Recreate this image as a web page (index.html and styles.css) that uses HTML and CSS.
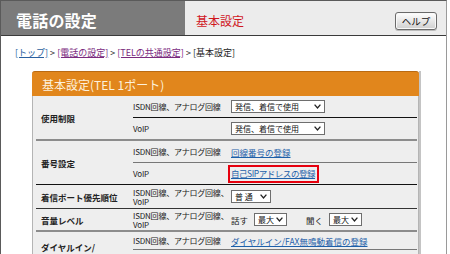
FILE: index.html
```html
<!DOCTYPE html>
<html lang="ja">
<head>
<meta charset="utf-8">
<title>電話の設定</title>
<link rel="stylesheet" href="styles.css">
</head>
<body>
<div class="frame">
  <header class="top">
    <div class="title">電話の設定</div>
    <div class="subtitle">基本設定</div>
    <button class="help">ヘルプ</button>
  </header>
  <nav class="crumbs">
    <a class="c-top" href="#">[トップ]</a> &gt; <a class="c-vis" href="#">[電話の設定]</a> &gt; <a class="c-vis" href="#">[TELの共通設定]</a> &gt; [基本設定]
  </nav>
  <section class="panel">
    <h2 class="panel-head">基本設定(TEL 1ポート)</h2>
    <div class="rows">
      <div class="row row-gray">
        <div class="label">使用制限</div>
        <div class="subs">
          <div class="sub"><div class="kind">ISDN回線、アナログ回線</div><div class="ctl"><div class="sel w93"><span>発信、着信で使用</span><svg class="chev" viewBox="0 0 7 5"><polyline points="0.6,0.6 3.5,4 6.4,0.6"/></svg></div></div></div>
          <div class="sub"><div class="kind">VoIP</div><div class="ctl"><div class="sel w93"><span>発信、着信で使用</span><svg class="chev" viewBox="0 0 7 5"><polyline points="0.6,0.6 3.5,4 6.4,0.6"/></svg></div></div></div>
        </div>
      </div>
      <div class="row row-dark">
        <div class="label">番号設定</div>
        <div class="subs">
          <div class="sub sub-light"><div class="kind">ISDN回線、アナログ回線</div><div class="ctl"><a class="link" href="#">回線番号の登録</a></div></div>
          <div class="sub"><div class="kind">VoIP</div><div class="ctl"><span class="mark"><a class="link" href="#">自己SIPアドレスの登録</a></span></div></div>
        </div>
      </div>
      <div class="row row-dark2">
        <div class="label">着信ポート優先順位</div>
        <div class="subs">
          <div class="sub sub-tall"><div class="kind wrap">ISDN回線、アナログ回線、<br>VoIP</div><div class="ctl"><div class="sel w40"><span>普 通</span><svg class="chev" viewBox="0 0 7 5"><polyline points="0.6,0.6 3.5,4 6.4,0.6"/></svg></div></div></div>
        </div>
      </div>
      <div class="row row-gray">
        <div class="label">音量レベル</div>
        <div class="subs">
          <div class="sub sub-vol"><div class="kind wrap">ISDN回線、アナログ回線、<br>VoIP</div><div class="ctl vol"><span>話す</span><div class="sel w33"><span>最大</span><svg class="chev" viewBox="0 0 7 5"><polyline points="0.6,0.6 3.5,4 6.4,0.6"/></svg></div><span class="listen">聞く</span><div class="sel w33"><span>最大</span><svg class="chev" viewBox="0 0 7 5"><polyline points="0.6,0.6 3.5,4 6.4,0.6"/></svg></div></div></div>
        </div>
      </div>
      <div class="row row-last">
        <div class="label label-top">ダイヤルイン/</div>
        <div class="subs">
          <div class="sub sub-short"><div class="kind">ISDN回線、アナログ回線</div><div class="ctl"><a class="link" href="#">ダイヤルイン/FAX無鳴動着信の登録</a></div></div>
        </div>
      </div>
    </div>
  </section>
</div>
</body>
</html>
```
FILE: styles.css
```css
html, body {
  margin: 0;
  padding: 0;
  background: #fff;
}
body {
  width: 450px;
  height: 254px;
  overflow: hidden;
  font-family: "Noto Sans CJK JP", "Noto Sans", sans-serif;
  color: #222;
}
.frame {
  width: 445px;
  height: 253px;
  overflow: hidden;
  border-top: 1px solid #5a5a5a;
  border-left: 1px solid #5a5a5a;
  border-right: 1px solid #9a9a9a;
}
.top {
  display: flex;
  align-items: stretch;
  height: 34px;
  background: #ececec;
  border-bottom: 1px solid #3a3a3a;
}
.title {
  width: 169px;
  padding-left: 15px;
  padding-top: 4px;
  box-sizing: content-box;
  background: #7b7b7b;
  color: #fff;
  font-size: 16px;
  font-weight: bold;
  display: flex;
  align-items: center;
  letter-spacing: 0.2px;
}
.subtitle {
  flex: 1;
  padding-left: 11px;
  padding-top: 4px;
  display: flex;
  align-items: center;
  color: #d0161e;
  font-size: 12px;
}
.help {
  align-self: flex-start;
  margin: 11px 9px 0 0;
  width: 42px;
  height: 18px;
  padding: 0;
  border: 1px solid #6a6a6a;
  border-radius: 3px;
  background: linear-gradient(#ffffff, #e2e2e2 60%, #cfcfcf);
  box-shadow: inset 0 0 0 1px #f8f8f8, 0 1px 0 #bbb;
  font-family: "Noto Sans CJK JP", sans-serif;
  font-size: 9.5px;
  color: #111;
  line-height: 16px;
}
.crumbs {
  padding: 11px 0 0 14px;
  height: 12px;
  line-height: 12px;
  font-size: 9px;
  color: #222;
  white-space: nowrap;
}
.crumbs a {
  text-decoration: underline;
}
.c-top { color: #2a5f9e; }
.c-vis { color: #7a2a7e; }
.panel {
  margin: 12px 0 0 31px;
  width: 387px;
  box-shadow: 2px 0 0 #c4c4c4;
}
.panel-head {
  margin: 0;
  height: 25px;
  line-height: 25px;
  padding-left: 10px;
  background: #e1861c;
  border-top: 1px solid #b96a12;
  box-sizing: border-box;
  border-radius: 3px 3px 0 0;
  color: #fdf1dc;
  font-size: 12px;
  font-weight: normal;
}
.rows {
  background: #eeeeee;
  border-left: 1px solid #b4b4b4;
  border-right: 1px solid #b4b4b4;
  padding: 0 1px 0 3px;
}
.row {
  display: grid;
  grid-template-columns: 97px 1fr;
}
.row-gray { border-bottom: 2px solid #8c8c8c; }
.row-dark { border-bottom: 1px solid #111; }
.row-dark2 { border-bottom: 1px solid #333; }
.row-last { min-height: 30px; }
.label {
  align-self: center;
  padding-left: 5px;
  font-size: 8.5px;
  font-weight: bold;
  line-height: 10px;
  color: #222;
}
.label-top {
  align-self: start;
  padding-top: 10px;
}
.subs {
  display: flex;
  flex-direction: column;
}
.sub {
  display: grid;
  grid-template-columns: 95px 1fr;
  align-items: center;
  height: 21px;
}
.sub + .sub { border-top: 1px solid #111; }
.sub-light + .sub { border-top-color: #777; }
.sub-tall { height: 23px; }
.sub-vol { height: 21px; }
.sub-short {
  height: 17px;
  border-bottom: 1px solid #777;
}
.kind {
  font-size: 8px;
  line-height: 9px;
  color: #222;
  white-space: nowrap;
  letter-spacing: -0.2px;
}
.kind.wrap {
  line-height: 9px;
}
.ctl {
  display: flex;
  align-items: center;
  padding-left: 3px;
  font-size: 8px;
}
.sel {
  display: flex;
  align-items: center;
  height: 13px;
  box-sizing: border-box;
  border: 1px solid #6e6e6e;
  background: #fff;
  padding-left: 3px;
  font-size: 8px;
  line-height: 11px;
  color: #111;
}
.sel span { white-space: pre; }
.chev {
  margin-left: auto;
  margin-right: 3px;
  width: 7px;
  height: 5px;
  fill: none;
  stroke: #222;
  stroke-width: 1.3;
}
.w93 { width: 94px; }
.w40 { width: 40px; }
.w33 { width: 33px; margin-left: 6px; }
.vol { font-size: 8.5px; }
.listen { margin-left: 19px; }
.link {
  color: #1d5fa9;
  text-decoration: underline;
  font-size: 8.5px;
  line-height: 10px;
  white-space: nowrap;
}
.mark {
  display: inline-block;
  margin-left: -3px;
  border: 2px solid #e6000e;
  padding: 1px 2px 2px 1px;
  line-height: 10px;
}
.mark .link {
  letter-spacing: -0.45px;
}
```
